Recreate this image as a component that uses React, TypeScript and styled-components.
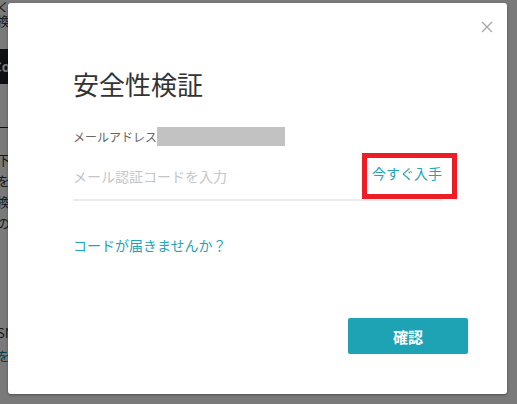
import React from "react";
import styled, { createGlobalStyle } from "styled-components";

const Global = createGlobalStyle`
  html, body { margin: 0; padding: 0; }
  body {
    width: 517px;
    height: 404px;
    overflow: hidden;
    font-family: "Noto Sans CJK JP", "Noto Sans", sans-serif;
    background: #ffffff;
  }
`;

const Page = styled.div`
  position: relative;
  width: 517px;
  height: 404px;
  overflow: hidden;
  background: #ffffff;
`;

const Behind = styled.div`
  width: 10px;
  height: 404px;
  display: flex;
  flex-direction: column;
  color: #333;
  font-size: 13px;
  line-height: 1;
`;

const BgLine = styled.div<{ $h: number; $dark?: boolean; $color?: string; $border?: boolean }>`
  height: ${(p) => p.$h}px;
  display: flex;
  justify-content: flex-end;
  align-items: center;
  overflow: hidden;
  white-space: nowrap;
  background: ${(p) => (p.$dark ? "#1f2229" : "transparent")};
  color: ${(p) => (p.$dark ? "#ffffff" : p.$color || "#333")};
  border-bottom: ${(p) => (p.$border ? "1px solid #222" : "none")};
  font-weight: ${(p) => (p.$dark ? 700 : 400)};
`;

const BgText = styled.span<{ $shift?: number }>`
  flex: none;
  margin-right: ${(p) => -(p.$shift || 0)}px;
`;

const Overlay = styled.div`
  position: absolute;
  inset: 0;
  background: rgba(0, 0, 0, 0.52);
`;

const Modal = styled.div`
  position: absolute;
  left: 8px;
  top: 3px;
  width: 499px;
  height: 391px;
  box-sizing: border-box;
  background: #fff;
  border-radius: 3px;
  box-shadow: 0 1px 3px rgba(0, 0, 0, 0.35);
  padding: 63px 39px 40px 65px;
  display: flex;
  flex-direction: column;
`;

const Close = styled.button`
  position: absolute;
  top: 18px;
  right: 14px;
  width: 12px;
  height: 12px;
  padding: 0;
  border: none;
  background: transparent;
  display: flex;
  cursor: pointer;
`;

const Title = styled.h2`
  margin: 0;
  font-size: 26px;
  line-height: 36px;
  font-weight: 400;
  color: #333;
`;

const LabelRow = styled.div`
  margin-top: 24px;
  height: 20px;
  display: flex;
  align-items: center;
  font-size: 12px;
  color: #666;
`;

const Masked = styled.span`
  display: inline-block;
  width: 128px;
  height: 19px;
  background: #c2c2c2;
`;

const InputRow = styled.div`
  position: relative;
  margin-top: 9px;
  width: 370px;
  height: 44px;
  display: flex;
  align-items: center;
  border-bottom: 2px solid #ececec;
`;

const CodeInput = styled.input`
  flex: 1;
  border: none;
  outline: none;
  padding: 0;
  margin: 0 0 3px 0;
  font-family: inherit;
  font-size: 14px;
  color: #333;
  background: transparent;
  &::placeholder { color: #c3c6cc; }
`;

const GetLink = styled.a`
  position: relative;
  font-size: 14px;
  line-height: 20px;
  color: #1ea4b6;
  text-decoration: none;
  margin: 0 1px 8px 0;
  white-space: nowrap;
`;

const Annotation = styled.span`
  position: absolute;
  left: -10px;
  top: -10px;
  width: 95px;
  height: 46px;
  box-sizing: border-box;
  border: 5px solid #ee1c25;
  pointer-events: none;
`;

const HelpLink = styled.a`
  margin-top: 34px;
  font-size: 14px;
  line-height: 20px;
  color: #1ea4b6;
  text-decoration: none;
`;

const Footer = styled.div`
  margin-top: auto;
  display: flex;
  justify-content: flex-end;
`;

const Confirm = styled.button`
  width: 120px;
  height: 36px;
  border: none;
  border-radius: 2px;
  background: #1ea3b4;
  color: #fff;
  font-family: inherit;
  font-size: 15px;
  font-weight: 700;
  cursor: pointer;
`;

export default function App() {
  return (
    <Page>
      <Global />
      <Behind>
        <BgLine $h={12}><BgText>ネットにログインなく</BgText></BgLine>
        <BgLine $h={16}><BgText>交換</BgText></BgLine>
        <BgLine $h={21} />
        <BgLine $h={35} $dark><BgText>Co</BgText></BgLine>
        <BgLine $h={43} $border />
        <BgLine $h={21} />
        <BgLine $h={21}><BgText>以下</BgText></BgLine>
        <BgLine $h={21}><BgText>を</BgText></BgLine>
        <BgLine $h={21}><BgText>交換</BgText></BgLine>
        <BgLine $h={21}><BgText>の</BgText></BgLine>
        <BgLine $h={88} />
        <BgLine $h={22}><BgText $shift={12}>SNS</BgText></BgLine>
        <BgLine $h={24} $color="#127f8c"><BgText>を</BgText></BgLine>
      </Behind>
      <Overlay />
      <Modal>
        <Close aria-label="閉じる">
          <svg width="12" height="12" viewBox="0 0 12 12">
            <path d="M1 1 L11 11 M11 1 L1 11" stroke="#a5a5a5" strokeWidth="1.3" fill="none" />
          </svg>
        </Close>
        <Title>安全性検証</Title>
        <LabelRow>
          メールアドレス<Masked />
        </LabelRow>
        <InputRow>
          <CodeInput placeholder="メール認証コードを入力" />
          <GetLink href="#">
            今すぐ入手
            <Annotation />
          </GetLink>
        </InputRow>
        <HelpLink href="#">コードが届きませんか？</HelpLink>
        <Footer>
          <Confirm>確認</Confirm>
        </Footer>
      </Modal>
    </Page>
  );
}
